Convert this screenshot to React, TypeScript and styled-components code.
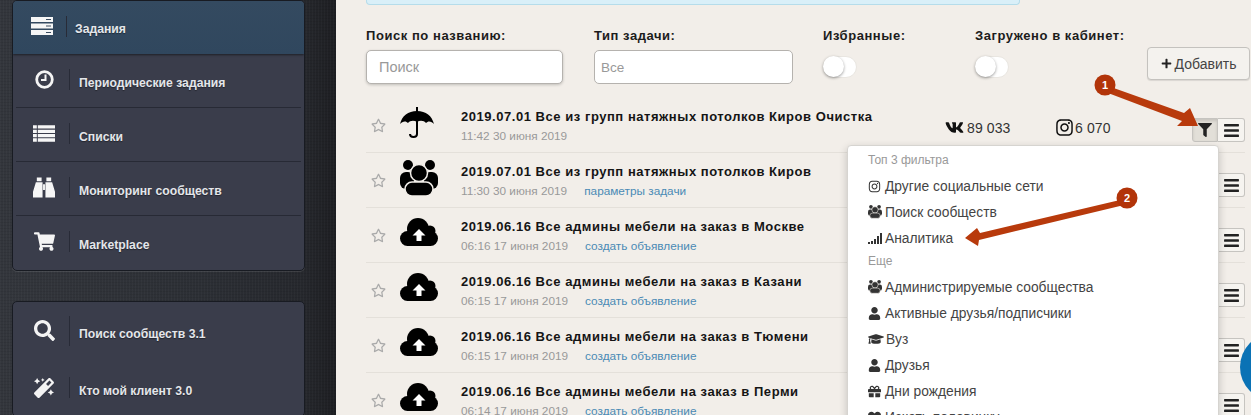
import React from 'react';
import styled, { createGlobalStyle } from 'styled-components';
import {
  FaBars,
  FaFilter,
  FaGift,
  FaGraduationCap,
  FaHeart,
  FaInstagram,
  FaMagic,
  FaPlus,
  FaRegStar,
  FaSearch,
  FaShoppingCart,
  FaUser,
  FaVk,
} from 'react-icons/fa';

const GlobalStyle = createGlobalStyle`
  html, body {
    margin: 0;
    padding: 0;
    height: 415px;
    overflow: hidden;
    background: #f2eee9;
    font-family: 'Liberation Sans', Arial, sans-serif;
  }
  * { box-sizing: border-box; }
`;

const Page = styled.div`
  position: relative;
  display: flex;
  width: 1251px;
  height: 415px;
  overflow: hidden;
`;

const Sidebar = styled.aside`
  flex: 0 0 336px;
  height: 415px;
  padding: 0 31px 0 12px;
  background:
    repeating-linear-gradient(90deg, rgba(255, 255, 255, 0.025) 0 1px, transparent 1px 3px),
    repeating-linear-gradient(0deg, rgba(0, 0, 0, 0.07) 0 1px, transparent 1px 3px),
    linear-gradient(90deg, #33363c 0, #2c2f35 60%, #26282d 90%, #1d1e22 100%);
`;

const Panel = styled.nav`
  border: 1px solid #181b22;
  border-radius: 5px;
  background: #3a3d4b;
  box-shadow: 0 1px 0 rgba(255, 255, 255, 0.1);
  overflow: hidden;

  & + & {
    margin-top: 30px;
  }
`;

const NavRow = styled.div<{ $active?: boolean; $h: number }>`
  display: flex;
  align-items: center;
  height: ${(p) => p.$h}px;
  padding-left: ${(p) => (p.$active ? 17 : 20)}px;
  position: relative;
  background: ${(p) => (p.$active ? 'linear-gradient(#344a60, #30475e)' : 'transparent')};
  box-shadow: ${(p) => (p.$active ? '0 1px 2px rgba(0,0,0,0.5)' : 'none')};

  & + &::before {
    content: '';
    position: absolute;
    top: -1px;
    left: 3px;
    right: 3px;
    height: 1px;
    background: #272a35;
  }
`;

const NavIcon = styled.span<{ $active?: boolean }>`
  display: flex;
  align-items: center;
  justify-content: center;
  width: ${(p) => (p.$active ? 24 : 22)}px;
  margin-top: -3px;
  font-size: 21px;
  color: #f4f4f4;
`;

const NavDivider = styled.span<{ $active?: boolean; $tall?: boolean }>`
  width: 1px;
  height: ${(p) => (p.$tall ? 30 : 21)}px;
  margin: -3px ${(p) => (p.$active ? 8 : 9)}px 0 ${(p) => (p.$active ? 12 : 14)}px;
  background: #282b37;
`;

const NavLabel = styled.span`
  margin-top: 3px;
  font-size: 12.2px;
  font-weight: bold;
  color: #e4e6ea;
  text-shadow: 0 1px 1px rgba(0, 0, 0, 0.4);
`;

const Main = styled.main`
  flex: 1;
  padding-left: 30px;
  background: #f2eee9;
`;

const Notice = styled.div`
  width: 654px;
  height: 5px;
  background: #d9eff8;
  border: 1px solid #b5dcea;
  border-top: 0;
  border-radius: 0 0 4px 4px;
`;

const Filters = styled.div`
  display: flex;
  height: 93px;
  padding-top: 23px;
`;

const Field = styled.div<{ $w: number }>`
  flex: 0 0 ${(p) => p.$w}px;
`;

const FieldLabel = styled.div`
  height: 22px;
  font-size: 13px;
  font-weight: bold;
  line-height: 15px;
  letter-spacing: 0.55px;
  color: #1c1c1c;
`;

const TextBox = styled.div<{ $w: number; $inset: number; $size: number; $shadow?: boolean }>`
  display: flex;
  align-items: center;
  width: ${(p) => p.$w}px;
  height: 34px;
  padding-left: ${(p) => p.$inset}px;
  background: #fff;
  border: 1px solid #b5b2ae;
  border-radius: 5px;
  font-size: ${(p) => p.$size}px;
  color: #999;
  box-shadow: ${(p) => (p.$shadow ? '0 1px 3px rgba(0,0,0,0.2)' : 'none')};
`;

const Toggle = styled.div`
  width: 34px;
  height: 22px;
  margin-top: 6px;
  border-radius: 11px;
  background: #fff;
  border: 1px solid #e9e6e1;
`;

const Knob = styled.div`
  width: 21px;
  height: 21px;
  margin: -1px 0 0 -1px;
  border-radius: 50%;
  background: #fff;
  box-shadow: 0 1px 3px rgba(0, 0, 0, 0.4);
`;

const AddButton = styled.button`
  display: flex;
  align-items: center;
  justify-content: center;
  gap: 3px;
  width: 103px;
  height: 33px;
  margin-top: 19px;
  padding: 0;
  background: #f4f2ee;
  border: 1px solid #c4c2be;
  border-radius: 4px;
  font-family: inherit;
  font-size: 14px;
  color: #444;
  box-shadow: 0 1px 1px rgba(0, 0, 0, 0.1);

  svg {
    font-size: 11px;
    color: #222;
  }
`;

const Row = styled.div`
  display: flex;
  width: 879px;
  height: 55px;
  border-bottom: 1px solid #e4e0da;
`;

const StarCell = styled.div`
  flex: 0 0 34px;
  padding: 20px 0 0 5px;
  font-size: 15px;
  color: #aaa;
`;

const IconCell = styled.div<{ $top: number }>`
  flex: 0 0 61px;
  padding-top: ${(p) => p.$top}px;
  color: #000;

  svg {
    display: block;
  }
`;

const TextCell = styled.div`
  flex: 0 0 484px;
  padding-top: 11px;
`;

const RowTitle = styled.div`
  height: 20px;
  font-size: 13px;
  font-weight: bold;
  line-height: 15px;
  letter-spacing: 0.54px;
  color: #151515;
`;

const RowMeta = styled.div`
  display: flex;
  gap: 17px;
  font-size: 11.8px;
  line-height: 14px;
  color: #999;
`;

const MetaLink = styled.a`
  color: #4a8ab5;
`;

const StatCell = styled.div<{ $w: number; $gap: number; $icon: number }>`
  flex: 0 0 ${(p) => p.$w}px;
  display: flex;
  align-items: center;
  gap: ${(p) => p.$gap}px;
  height: 59px;
  font-size: 14px;
  letter-spacing: 0.1px;
  color: #333;

  svg {
    font-size: ${(p) => p.$icon}px;
    color: #111;
  }
`;

const Actions = styled.div`
  flex: 0 0 53px;
  display: flex;
  align-items: flex-start;
  justify-content: flex-end;
  padding-top: 20px;
`;

const ActionButton = styled.div<{ $pressed?: boolean }>`
  display: flex;
  align-items: center;
  justify-content: center;
  width: ${(p) => (p.$pressed ? 26 : 27)}px;
  height: 24px;
  background: ${(p) => (p.$pressed ? '#e2dfd8' : '#f6f4f0')};
  border: 1px solid #c6c4c0;
  border-left-width: ${(p) => (p.$pressed ? 1 : 0)}px;
  border-radius: ${(p) => (p.$pressed ? '3px 0 0 3px' : '0 3px 3px 0')};
  font-size: 17px;
  color: #222;
  box-shadow: ${(p) => (p.$pressed ? 'inset 0 2px 3px rgba(0,0,0,0.12)' : 'none')};
`;

const Menu = styled.div`
  position: absolute;
  left: 847px;
  top: 145px;
  width: 372px;
  padding: 4px 19px 8px 20px;
  background: #fff;
  border: 1px solid #d6d4d0;
  border-radius: 4px;
  box-shadow: 0 3px 8px rgba(0, 0, 0, 0.2);
`;

const MenuHeader = styled.div`
  height: 23px;
  font-size: 12px;
  line-height: 20px;
  color: #999;
`;

const MenuItem = styled.div`
  display: flex;
  align-items: center;
  height: 26px;
  font-size: 13.8px;
  color: #444;
`;

const MenuIcon = styled.span<{ $w: number }>`
  display: flex;
  align-items: center;
  flex: 0 0 ${(p) => p.$w}px;
  font-size: 13px;
  color: #333;
`;

const Overlay = styled.svg`
  position: absolute;
  left: 0;
  top: 0;
  pointer-events: none;
`;

const Bubble = styled.div`
  position: absolute;
  left: 1240px;
  top: 333px;
  width: 68px;
  height: 68px;
  border-radius: 50%;
  background: #0a72b5;
`;

const SignalIcon = () => (
  <svg width="14" height="12" viewBox="0 0 14 12" fill="#333">
    <rect x="0" y="10" width="2" height="2" />
    <rect x="3" y="9" width="2" height="3" />
    <rect x="6" y="7" width="2" height="5" />
    <rect x="9" y="4" width="2" height="8" />
    <rect x="12" y="1" width="2" height="11" />
  </svg>
);

const ServerIcon = () => (
  <svg width="22" height="18" viewBox="0 0 22 18" fill="#f6f6f6">
    <path d="M0 0h22v5H0zM0 6.5h22v5H0zM0 13h22v5H0z" />
    <path d="M15 2h5v1h-5zM15 8.5h5v1h-5zM15 15h5v1h-5z" fill="#3a4c60" />
  </svg>
);

const ClockIcon = () => (
  <svg width="19" height="19" viewBox="0 0 19 19" fill="none" stroke="#f4f4f4">
    <circle cx="9.5" cy="9.5" r="7.8" strokeWidth="2.8" />
    <path d="M10.5 4.5v5.6H6" strokeWidth="2" />
  </svg>
);

const ListIcon = () => (
  <svg width="23" height="17" viewBox="0 0 23 17" fill="#f6f6f6">
    <path d="M0 0h4v3.4H0zM5 0h18v3.4H5zM0 4.5h4v3.4H0zM5 4.5h18v3.4H5zM0 9h4v3.4H0zM5 9h18v3.4H5zM0 13.5h4V17H0zM5 13.5h18V17H5z" />
  </svg>
);

const BinocularsIcon = () => (
  <svg width="23" height="21" viewBox="0 0 23 21" fill="#f6f6f6">
    <path d="M4 0h5v4H4zM14 0h5v4h-5z" />
    <path d="M3 5h7v16H0v-6zM20 5h-7v16h10v-6z" />
    <path d="M10.500 7h2v6h-2z" />
  </svg>
);

const UmbrellaIcon = () => (
  <svg width="34" height="33" viewBox="0 0 34 33">
    <path d="M16 0h2v5h-2z" />
    <path d="M17 4C8 4 2 9 0 17c2.500-3 6-3.500 8-1 2-2.500 6-3 9-1 3-2 7-1.500 9 1 2-2.500 5.500-2 8 1C32 9 26 4 17 4z" />
    <path d="M17 13v14c0 4-7 4-7 0" fill="none" stroke="#000" strokeWidth="2" />
  </svg>
);

const UsersIcon = ({ size }: { size: number }) => (
  <svg width={size} height={size * 0.95} viewBox="0 0 38 36" fill="currentColor">
    <circle cx="8" cy="5" r="5" />
    <circle cx="30" cy="5" r="5" />
    <rect x="0" y="12" width="14" height="17" rx="6" />
    <rect x="24" y="12" width="14" height="17" rx="6" />
    <circle cx="19" cy="13" r="8.500" stroke="#f2eee9" strokeWidth="1.500" />
    <rect x="5" y="22" width="28" height="14" rx="7" stroke="#f2eee9" strokeWidth="1.500" />
  </svg>
);

const CloudIcon = () => (
  <svg width="38" height="28" viewBox="0 0 38 28">
    <circle cx="18" cy="11" r="11" />
    <circle cx="30" cy="13" r="5.500" />
    <rect x="0" y="13" width="38" height="15" rx="7.500" />
    <path d="M19 11l6.500 6.500h-4V23h-5v-5.500h-4z" fill="#fff" />
  </svg>
);

const firstPanel = [
  { icon: <ServerIcon />, label: 'Задания', active: true, h: 53 },
  { icon: <ClockIcon />, label: 'Периодические задания', h: 54 },
  { icon: <ListIcon />, label: 'Списки', h: 54 },
  { icon: <BinocularsIcon />, label: 'Мониторинг сообществ', h: 54 },
  { icon: <FaShoppingCart />, label: 'Marketplace', h: 54 },
];

const secondPanel = [
  { icon: <FaSearch />, label: 'Поиск сообществ 3.1', tall: true, h: 60 },
  { icon: <FaMagic size={20} />, label: 'Кто мой клиент 3.0', h: 54 },
];

const tasks = [
  { icon: <UmbrellaIcon />, top: 9, title: '2019.07.01 Все из групп натяжных потолков Киров Очистка', date: '11:42 30 июня 2019', stats: true, pressed: true },
  { icon: <UsersIcon size={38} />, top: 7, title: '2019.07.01 Все из групп натяжных потолков Киров', date: '11:30 30 июня 2019', link: 'параметры задачи' },
  { icon: <CloudIcon />, top: 10, title: '2019.06.16 Все админы мебели на заказ в Москве', date: '06:16 17 июня 2019', link: 'создать объявление' },
  { icon: <CloudIcon />, top: 10, title: '2019.06.16 Все админы мебели на заказ в Казани', date: '06:15 17 июня 2019', link: 'создать объявление' },
  { icon: <CloudIcon />, top: 10, title: '2019.06.16 Все админы мебели на заказ в Тюмени', date: '06:15 17 июня 2019', link: 'создать объявление' },
  { icon: <CloudIcon />, top: 10, title: '2019.06.16 Все админы мебели на заказ в Перми', date: '06:14 17 июня 2019', link: 'создать объявление' },
];

const menuItems = [
  { header: 'Топ 3 фильтра' },
  { icon: <FaInstagram />, w: 17, label: 'Другие социальные сети' },
  { icon: <UsersIcon size={14} />, w: 17, label: 'Поиск сообществ' },
  { icon: <SignalIcon />, w: 17, label: 'Аналитика' },
  { header: 'Еще' },
  { icon: <UsersIcon size={14} />, w: 17, label: 'Администрируемые сообщества' },
  { icon: <FaUser />, w: 17, label: 'Активные друзья/подписчики' },
  { icon: <FaGraduationCap size={16} />, w: 18, label: 'Вуз' },
  { icon: <FaUser />, w: 17, label: 'Друзья' },
  { icon: <FaGift />, w: 17, label: 'Дни рождения' },
  { icon: <FaHeart />, w: 17, label: 'Искать половинку' },
];

const NavPanel = ({ items }: { items: { icon: React.ReactNode; label: string; h: number; active?: boolean; tall?: boolean }[] }) => (
  <Panel>
    {items.map((item) => (
      <NavRow key={item.label} $active={item.active} $h={item.h}>
        <NavIcon $active={item.active}>{item.icon}</NavIcon>
        <NavDivider $active={item.active} $tall={item.tall} />
        <NavLabel>{item.label}</NavLabel>
      </NavRow>
    ))}
  </Panel>
);

export default function App() {
  return (
    <Page>
      <GlobalStyle />
      <Sidebar>
        <NavPanel items={firstPanel} />
        <NavPanel items={secondPanel} />
      </Sidebar>
      <Main>
        <Notice />
        <Filters>
          <Field $w={228}>
            <FieldLabel>Поиск по названию:</FieldLabel>
            <TextBox $w={197} $inset={12} $size={14.5} $shadow>Поиск</TextBox>
          </Field>
          <Field $w={229}>
            <FieldLabel>Тип задачи:</FieldLabel>
            <TextBox $w={199} $inset={6} $size={13.5}>Все</TextBox>
          </Field>
          <Field $w={152}>
            <FieldLabel>Избранные:</FieldLabel>
            <Toggle><Knob /></Toggle>
          </Field>
          <Field $w={172}>
            <FieldLabel>Загружено в кабинет:</FieldLabel>
            <Toggle><Knob /></Toggle>
          </Field>
          <AddButton><FaPlus /> Добавить</AddButton>
        </Filters>
        {tasks.map((task) => (
          <Row key={task.title}>
            <StarCell><FaRegStar /></StarCell>
            <IconCell $top={task.top}>{task.icon}</IconCell>
            <TextCell>
              <RowTitle>{task.title}</RowTitle>
              <RowMeta>
                <span>{task.date}</span>
                {task.link && <MetaLink>{task.link}</MetaLink>}
              </RowMeta>
            </TextCell>
            <StatCell $w={110} $gap={3} $icon={19}>
              {task.stats && <><FaVk /> 89 033</>}
            </StatCell>
            <StatCell $w={137} $gap={1} $icon={19}>
              {task.stats && <><FaInstagram /> 6 070</>}
            </StatCell>
            <Actions>
              {task.pressed && <ActionButton $pressed><FaFilter size={14} /></ActionButton>}
              <ActionButton><FaBars /></ActionButton>
            </Actions>
          </Row>
        ))}
      </Main>
      <Bubble />
      <Menu>
        {menuItems.map((item) =>
          item.header ? (
            <MenuHeader key={item.header}>{item.header}</MenuHeader>
          ) : (
            <MenuItem key={item.label}>
              <MenuIcon $w={item.w as number}>{item.icon}</MenuIcon>
              {item.label}
            </MenuItem>
          ),
        )}
      </Menu>
      <Overlay width="1251" height="415" viewBox="0 0 1251 415">
        <polygon points="1108,86 1184,113 1190,108 1198,126 1177,126 1182,121 1108,93" fill="#b83a0c" />
        <circle cx="1105" cy="85" r="10.5" fill="#b23409" />
        <text x="1105" y="89" textAnchor="middle" fontSize="11" fontWeight="bold" fill="#fff" fontFamily="'Liberation Sans', sans-serif">1</text>
        <polygon points="1120,200 980,233 977,228 965,238 978,246 979,240 1120,206" fill="#b83a0c" />
        <circle cx="1127" cy="198" r="10.5" fill="#b23409" />
        <text x="1127" y="202" textAnchor="middle" fontSize="11" fontWeight="bold" fill="#fff" fontFamily="'Liberation Sans', sans-serif">2</text>
      </Overlay>
    </Page>
  );
}
